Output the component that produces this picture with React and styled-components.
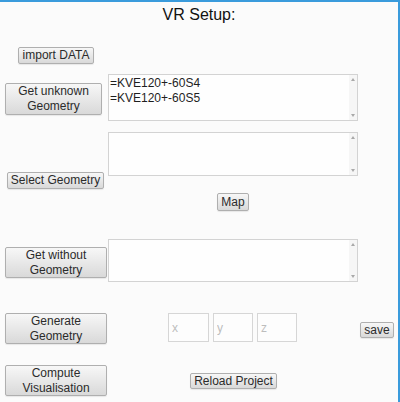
import React from "react";
import styled, { createGlobalStyle } from "styled-components";

const Global = createGlobalStyle`
  html, body { margin: 0; padding: 0; background: #fbfbfb; }
  * { box-sizing: border-box; }
`;

const Page = styled.div`
  width: 400px;
  height: 402px;
  border-top: 2px solid #3a9bdc;
  border-right: 2px solid #3a9bdc;
  background: #fbfbfb;
  font-family: "Liberation Sans", Arial, sans-serif;
  color: #222;
  display: flex;
  flex-direction: column;
`;

const Title = styled.h1`
  margin: 4px 0 0;
  height: 18px;
  font-size: 16px;
  line-height: 18px;
  font-weight: normal;
  text-align: center;
  color: #111;
`;

const Row = styled.div`
  display: flex;
  align-items: flex-start;
  margin-top: ${(p) => p.$mt || 0}px;
`;

const Side = styled.div`
  width: 108px;
  flex: none;
  display: flex;
  align-items: flex-start;
`;

const Btn = styled.button`
  flex: none;
  width: ${(p) => p.$w}px;
  height: ${(p) => p.$h}px;
  margin-left: ${(p) => p.$ml || 0}px;
  margin-top: ${(p) => p.$mt || 0}px;
  padding: 0;
  white-space: nowrap;
  font-family: "Liberation Sans", Arial, sans-serif;
  font-size: 12px;
  line-height: 15px;
  color: #2b2b2b;
  background: linear-gradient(#f7f7f7, #d9d9d9);
  border: 1px solid #afafaf;
  border-radius: 2px;
  box-shadow: 0 1px 1px rgba(0, 0, 0, 0.08);
  text-align: center;
`;

const Field = styled.div`
  position: relative;
  width: 250px;
  height: ${(p) => p.$h}px;
  flex: none;
`;

const Area = styled.textarea`
  display: block;
  width: 100%;
  height: 100%;
  margin: 0;
  padding: 1px 10px 1px 1px;
  resize: none;
  overflow: hidden;
  font-family: "Liberation Sans", Arial, sans-serif;
  font-size: 12px;
  line-height: 15px;
  color: #1e1e1e;
  background: #fefefe;
  border: 1px solid #d3d3d3;
  outline: none;
`;

const Rail = styled.div`
  position: absolute;
  top: 1px;
  right: 1px;
  bottom: 1px;
  width: 8px;
  background: #f6f6f6;
  display: flex;
  flex-direction: column;
  justify-content: space-between;
  align-items: center;
  padding: 3px 0;
`;

const Arrow = styled.span`
  width: 0;
  height: 0;
  border-left: 2px solid transparent;
  border-right: 2px solid transparent;
  ${(p) =>
    p.$down
      ? "border-top: 3px solid #a9a9a9;"
      : "border-bottom: 3px solid #a9a9a9;"}
`;

const Coord = styled.input`
  flex: none;
  width: ${(p) => p.$w}px;
  height: 29px;
  margin-left: ${(p) => p.$ml || 0}px;
  padding: 0 3px;
  font-family: "Liberation Sans", Arial, sans-serif;
  font-size: 12px;
  color: #333;
  background: #fdfdfd;
  border: 1px solid #d6d6d6;
  outline: none;
  &::placeholder { color: #bdbdbd; }
`;

function TextBox({ h, value }) {
  return (
    <Field $h={h}>
      <Area defaultValue={value} />
      <Rail>
        <Arrow />
        <Arrow $down />
      </Rail>
    </Field>
  );
}

export default function App() {
  return (
    <>
      <Global />
      <Page>
        <Title>VR Setup:</Title>
        <Row $mt={23}>
          <Btn $w={76} $h={17} $ml={18}>import DATA</Btn>
        </Row>
        <Row $mt={10}>
          <Side>
            <Btn $w={97} $h={32} $ml={5} $mt={9}>Get unknown<br />Geometry</Btn>
          </Side>
          <TextBox h={47} value={"=KVE120+-60S4\n=KVE120+-60S5"} />
        </Row>
        <Row $mt={11}>
          <Side>
            <Btn $w={97} $h={17} $ml={7} $mt={40}>Select Geometry</Btn>
          </Side>
          <TextBox h={44} value="" />
        </Row>
        <Row $mt={4}>
          <Btn $w={32} $h={18} $ml={217}>Map</Btn>
        </Row>
        <Row $mt={28}>
          <Side>
            <Btn $w={102} $h={31} $ml={5} $mt={8}>Get without<br />Geometry</Btn>
          </Side>
          <TextBox h={43} value="" />
        </Row>
        <Row $mt={31}>
          <Btn $w={102} $h={31} $ml={5}>Generate<br />Geometry</Btn>
          <Coord $w={41} $ml={61} placeholder="x" />
          <Coord $w={40} $ml={4} placeholder="y" />
          <Coord $w={40} $ml={4} placeholder="z" />
          <Btn $w={34} $h={16} $ml={63} $mt={9}>save</Btn>
        </Row>
        <Row $mt={21}>
          <Btn $w={102} $h={31} $ml={5}>Compute<br />Visualisation</Btn>
          <Btn $w={87} $h={16} $ml={83} $mt={8}>Reload Project</Btn>
        </Row>
      </Page>
    </>
  );
}
